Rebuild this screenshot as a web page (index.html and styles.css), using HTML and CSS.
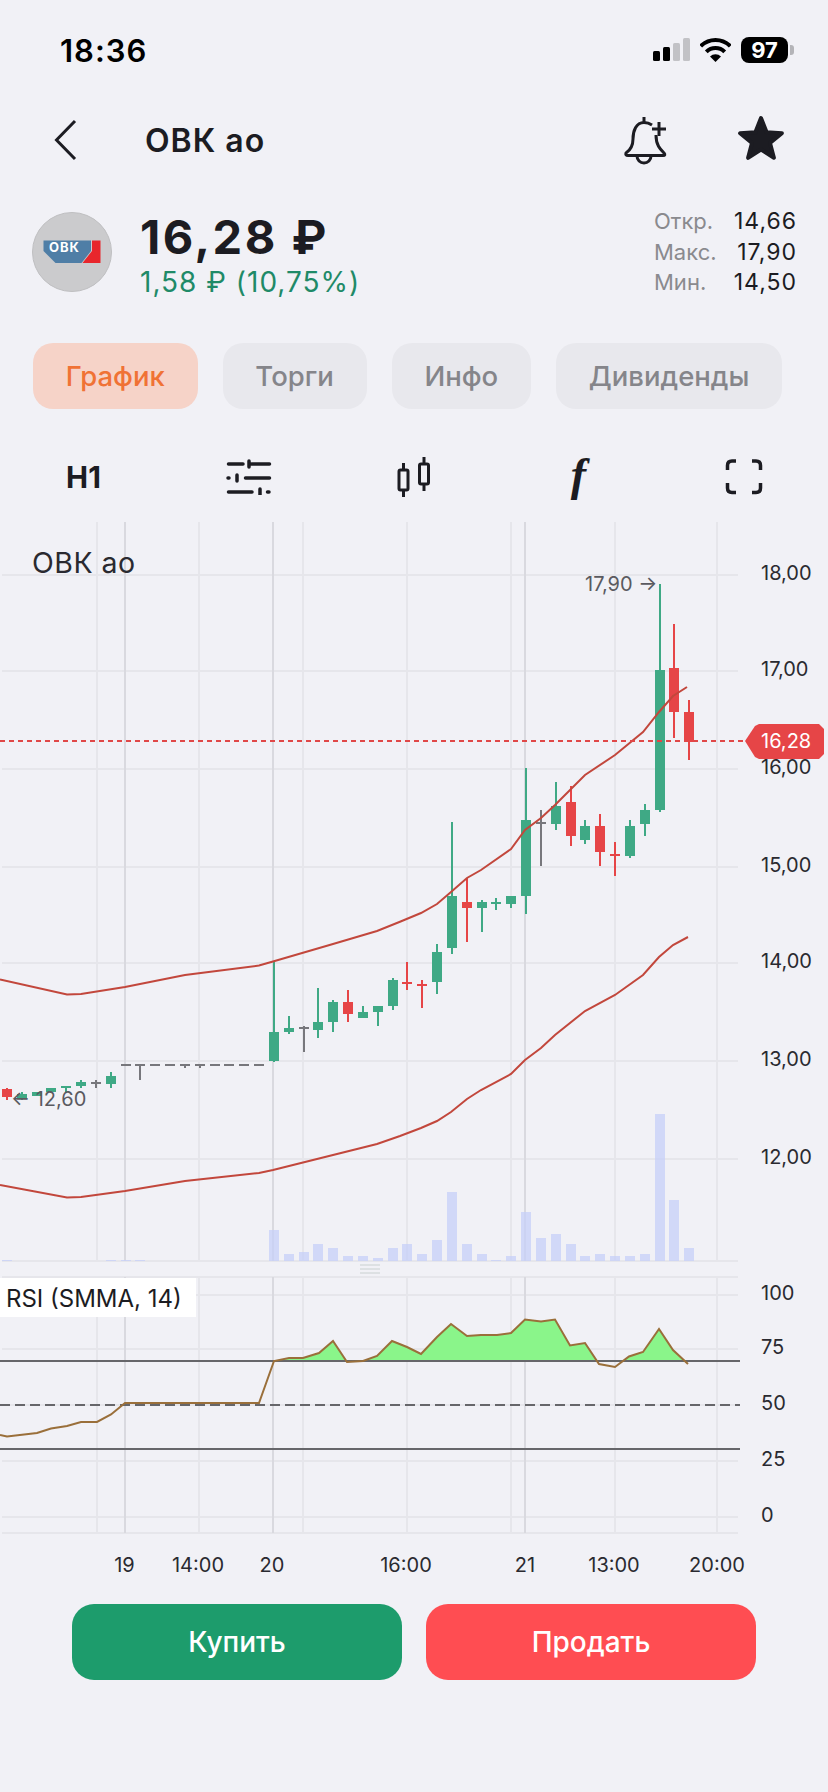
FILE: index.html
```html
<html>
  <head>
    <title>ОВК ао</title>
    <link rel="stylesheet" href="styles.css">
  </head>

  <body>
    <div class="status">
      <span class="clock">18:36</span>
      <div class="status-icons">
        <svg class="signal" width="37" height="24" viewBox="653 38 37 24">
          <rect x="653" y="51" width="7" height="10" rx="1.5" fill="#000"/>
          <rect x="663" y="47" width="7" height="14" rx="1.5" fill="#000"/>
          <rect x="673" y="43" width="7" height="18" rx="1.5" fill="#c2c2c6"/>
          <rect x="683" y="38" width="7" height="23" rx="1.5" fill="#c2c2c6"/>
        </svg>
        <svg class="wifi" width="31" height="24" viewBox="700 37 31 24">
          <path d="M700.7 45.2A21 21 0 0 1 730.3 45.2M706.3 50.8A13 13 0 0 1 724.7 50.8" fill="none" stroke="#000" stroke-width="4"/>
          <path d="M715.5 61L710 55.5A7.8 7.8 0 0 1 721 55.5Z" fill="#000"/>
        </svg>
        <div class="battery"><span>97</span></div>
        <div class="battery-nub"></div>
      </div>
    </div>

    <div class="topbar">
      <svg class="back" width="24" height="42" viewBox="54 118 24 42">
        <path d="M75 120L56.5 139L75 158" fill="none" stroke="#1c1c22" stroke-width="3"/>
      </svg>
      <span class="title">ОВК ао</span>
      <svg class="bell" width="48" height="50" viewBox="620 114 48 50">
        <path d="M643 116V122M651 124C648 122 646 121.500 643 121.500C635 121.500 632 130 632 138C632 146 628 150 625 152Q624 154.500 627 154.500H662Q665 154.500 663 152C659 148 655 144 655 134" fill="none" stroke="#1c1c22" stroke-width="3"/>
        <path d="M636 155A7 7 0 0 0 650 155" fill="none" stroke="#1c1c22" stroke-width="3"/>
        <path d="M658 121V135M651 128H665" fill="none" stroke="#1c1c22" stroke-width="3"/>
      </svg>
      <svg class="star" width="50" height="50" viewBox="735 114 50 50">
        <polygon points="760,117 765.600,131.300 780.900,132.200 769,141.900 772.900,156.800 760,148.500 747.100,156.800 751,141.900 739.100,132.200 754.400,131.300" fill="#1c1c22" stroke="#1c1c22" stroke-width="4" stroke-linejoin="round"/>
      </svg>
    </div>

    <div class="quote">
      <svg class="logo" width="80" height="80" viewBox="32 212 80 80">
        <circle cx="72" cy="252" r="39.500" fill="#cbcbcd" stroke="#bfbfc1" stroke-width="1"/>
        <polygon points="43.500,240.500 91,240.500 91,251 81.500,263 55.500,263 43.500,251" fill="#4f7ea6"/>
        <polygon points="92,240.500 100.500,240.500 100.500,263 82.500,263 92,251" fill="#e8262c"/>
        <text x="49" y="252" class="logo-text">ОВК</text>
      </svg>
      <div class="price-box">
        <div class="price">16,28 ₽</div>
        <div class="change">1,58 ₽ (10,75%)</div>
      </div>
      <div class="stats">
        <div class="stat"><span class="stat-label">Откр.</span><span class="stat-value">14,66</span></div>
        <div class="stat"><span class="stat-label">Макс.</span><span class="stat-value">17,90</span></div>
        <div class="stat"><span class="stat-label">Мин.</span><span class="stat-value">14,50</span></div>
      </div>
    </div>

    <div class="tabs">
      <div class="tab active">График</div>
      <div class="tab">Торги</div>
      <div class="tab">Инфо</div>
      <div class="tab">Дивиденды</div>
    </div>

    <div class="tools">
      <span class="tool-h1">H1</span>
      <svg width="46" height="36" viewBox="226 457 46 36">
        <path d="M228.500 462H243M249 459V465M251.500 462H269.500M228 476H229M237 473V479M245.500 476H269.500M228.500 490H252M260 487V493M267.500 490H269" fill="none" stroke="#1c1c22" stroke-width="3.500" stroke-linecap="round"/>
      </svg>
      <svg width="36" height="42" viewBox="396 455 36 42">
        <path d="M403.500 462V469M403.500 489V496M424 456V463M424 483V490" fill="none" stroke="#1c1c22" stroke-width="3"/>
        <rect x="399" y="469" width="9" height="20" rx="1.500" fill="none" stroke="#1c1c22" stroke-width="3"/>
        <rect x="419.500" y="463" width="9" height="20" rx="1.500" fill="none" stroke="#1c1c22" stroke-width="3"/>
      </svg>
      <span class="tool-f">f</span>
      <svg width="38" height="38" viewBox="725 458 38 36">
        <path d="M736 460H732Q727.500 460 727.500 464.500V469M752 460H756Q760.500 460 760.500 464.500V469M736 491.500H732Q727.500 491.500 727.500 487V482M752 491.500H756Q760.500 491.500 760.500 487V482" fill="none" stroke="#1c1c22" stroke-width="3.500"/>
      </svg>
    </div>

    <svg id="chart" class="chart" width="828" height="1070" viewBox="0 520 828 1070">
      <g id="grid"></g>
      <g id="volumes"></g>
      <g id="candles"></g>

      <polyline class="band" points="0,979.500 67,994.500 81,994 125,987 185,975 259,965.500 273,961.500 333,944 377,931 400,921.700 421,913 437,904 451,892 467,878 481,870 511,849 525,830 541,818 555,805 585,775 615,755 643,732 659,712 673,696 687,687"/>
      <polyline class="band" points="0,1185 67,1197.500 81,1197 125,1191 185,1181 259,1173 273,1170 333,1155 377,1144 400,1136 421,1128 437,1121 451,1112 467,1099 481,1090 511,1074 525,1060 541,1048 555,1035 585,1011 615,995 643,975 659,957 673,945 688,937"/>

      <line class="last-line" x1="0" y1="741" x2="746" y2="741"/>
      <polygon class="last-tag" points="745,741 755,726 759,724 819,724 824,729 824,754 819,759 759,759 755,757"/>
      <text class="last-text" x="761" y="748">16,28</text>

      <text class="chart-name" x="32" y="573">ОВК ао</text>
      <text class="mark" x="585" y="591">17,90 →</text>
      <text class="mark" x="11" y="1106">← 12,60</text>

      <g class="axis">
        <text x="761" y="580">18,00</text>
        <text x="761" y="676">17,00</text>
        <text x="761" y="774">16,00</text>
        <text x="761" y="872">15,00</text>
        <text x="761" y="968">14,00</text>
        <text x="761" y="1066">13,00</text>
        <text x="761" y="1164">12,00</text>
        <text x="761" y="1300">100</text>
        <text x="761" y="1354">75</text>
        <text x="761" y="1410">50</text>
        <text x="761" y="1466">25</text>
        <text x="761" y="1522">0</text>
      </g>

      <rect class="rsi-box" x="0" y="1278" width="196" height="39"/>
      <text class="rsi-name" x="6" y="1307">RSI (SMMA, 14)</text>

      <clipPath id="overbought"><rect x="0" y="1290" width="740" height="71"/></clipPath>
      <polygon class="rsi-fill" clip-path="url(#overbought)" points="274,1361 289,1358 303,1358 319,1353 333,1341 347,1362 363,1361 377,1356 392,1341 407,1347 421,1354 437,1337 451,1324 467,1336 481,1335 497,1335 511,1333 525,1319.500 541,1321.500 555,1319.500 570,1345.500 585,1343 599,1364 615,1367 629,1356.500 643,1352 659,1329 673,1350 688,1364"/>
      <line class="rsi-level" x1="0" y1="1361" x2="740" y2="1361"/>
      <line class="rsi-level dashed" x1="0" y1="1405" x2="740" y2="1405"/>
      <line class="rsi-level" x1="0" y1="1449" x2="740" y2="1449"/>
      <polyline class="rsi-line" points="0,1435 7,1436.500 37,1433 51,1428.500 67,1426 81,1422 97,1422 111,1414.500 125,1403 259,1403 274,1361 289,1358 303,1358 319,1353 333,1341 347,1362 363,1361 377,1356 392,1341 407,1347 421,1354 437,1337 451,1324 467,1336 481,1335 497,1335 511,1333 525,1319.500 541,1321.500 555,1319.500 570,1345.500 585,1343 599,1364 615,1367 629,1356.500 643,1352 659,1329 673,1350 688,1364"/>

      <g class="times">
        <text x="124.500" y="1572">19</text>
        <text x="198" y="1572">14:00</text>
        <text x="272" y="1572">20</text>
        <text x="406" y="1572">16:00</text>
        <text x="525" y="1572">21</text>
        <text x="614" y="1572">13:00</text>
        <text x="717" y="1572">20:00</text>
      </g>
    </svg>

    <div class="actions">
      <button class="btn buy">Купить</button>
      <button class="btn sell">Продать</button>
    </div>

    <script src="chart.js"></script>
  </body>
</html>
```

FILE: styles.css
```css
body {
  margin: 0px;
  width: 828px;
  height: 1792px;
  overflow: hidden;
  background-color: #f1f1f6;
  font-family: Inter, "Noto Sans", sans-serif;
  color: #1c1c22;
}

.status {
  display: flex;
  justify-content: space-between;
  align-items: center;
  height: 100px;
  padding: 0px 34px 0px 60px;
}

.clock {
  font-size: 31px;
  font-weight: 600;
  letter-spacing: 1px;
  color: #000;
}

.status-icons {
  display: flex;
  align-items: center;
  gap: 10px;
}

.battery {
  display: flex;
  justify-content: center;
  align-items: center;
  width: 47px;
  height: 26px;
  border-radius: 8px;
  background-color: #000;
  color: #fff;
  font-size: 22px;
  font-weight: 700;
}

.battery-nub {
  width: 4px;
  height: 10px;
  margin-left: -8px;
  border-radius: 0px 3px 3px 0px;
  background-color: #b4b4b8;
}

.topbar {
  display: flex;
  align-items: center;
  height: 80px;
  padding: 0px 42px 0px 54px;
}

.title {
  margin-left: 67px;
  font-size: 32px;
  font-weight: 600;
  letter-spacing: 1px;
  flex: 1;
}

.star {
  margin-left: 67px;
}

.quote {
  display: flex;
  align-items: center;
  height: 100px;
  margin-top: 22px;
  padding: 0px 31px 0px 32px;
}

.logo-text {
  font-size: 13px;
  font-weight: 700;
  letter-spacing: 1px;
  fill: #fff;
}

.price-box {
  flex: 1;
  margin-left: 28px;
  padding-top: 7px;
}

.price {
  font-size: 47px;
  font-weight: 700;
  line-height: 52px;
  letter-spacing: 2.5px;
}

.change {
  margin-top: 1.500px;
  font-size: 28px;
  line-height: 36px;
  letter-spacing: 1px;
  color: #1f8a68;
}

.stats {
  display: flex;
  flex-direction: column;
}

.stat {
  display: flex;
  justify-content: space-between;
  width: 143px;
  line-height: 30.500px;
  font-size: 22px;
}

.stat-label {
  color: #8a8a8e;
}

.stat-value {
  font-size: 23px;
  letter-spacing: 1px;
}

.tabs {
  display: flex;
  gap: 25px;
  margin-top: 41px;
  padding: 0px 33px;
}

.tab {
  display: flex;
  align-items: center;
  height: 66px;
  padding: 0px 32.800px;
  border-radius: 20px;
  background-color: #e8e8ed;
  color: #85858a;
  font-size: 27.500px;
  font-weight: 500;
}

.tab.active {
  background-color: #f6d3c8;
  color: #f07235;
}

.tools {
  display: grid;
  grid-template-columns: repeat(5, 165px);
  align-items: center;
  justify-items: center;
  height: 62px;
  margin-top: 37px;
  padding-left: 1px;
}

.tool-h1 {
  font-size: 29.500px;
  font-weight: 700;
}

.tool-f {
  font-family: "Liberation Serif", serif;
  font-style: italic;
  font-weight: 700;
  font-size: 46px;
  line-height: 50px;
  margin-bottom: 5px;
}

.chart {
  display: block;
  margin-top: 12px;
}

.grid-line {
  stroke: #e6e6eb;
  stroke-width: 2;
}

.grid-line.major {
  stroke: #d9d9df;
}

.volume {
  fill: #c6cff8;
  opacity: 0.75;
}

.band {
  fill: none;
  stroke: #c2473c;
  stroke-width: 2;
}

.last-line {
  stroke: #e04848;
  stroke-width: 2;
  stroke-dasharray: 5 4;
}

.last-tag {
  fill: #e64547;
}

.last-text {
  fill: #fff;
  font-size: 20px;
}

.chart-name {
  font-size: 28.500px;
  letter-spacing: 0.5px;
  fill: #2a2a30;
}

.mark {
  font-size: 20px;
  fill: #5a5a60;
}

.axis text,
.times text {
  font-size: 20px;
  fill: #2a2a30;
}

.times text {
  text-anchor: middle;
}

.rsi-box {
  fill: #fff;
}

.rsi-name {
  font-size: 24px;
  fill: #1c1c22;
}

.rsi-fill {
  fill: #8af58a;
}

.rsi-level {
  stroke: #66666a;
  stroke-width: 2;
}

.rsi-level.dashed {
  stroke-dasharray: 10 5;
}

.rsi-line {
  fill: none;
  stroke: #9a6f3a;
  stroke-width: 2;
}

.actions {
  display: flex;
  gap: 24px;
  margin-top: 14px;
  padding: 0px 72px;
}

.btn {
  flex: 1;
  height: 76px;
  border: none;
  border-radius: 22px;
  color: #fff;
  font-family: Inter, "Noto Sans", sans-serif;
  font-size: 28px;
  font-weight: 500;
}

.buy {
  background-color: #1d9c6c;
}

.sell {
  background-color: #ff4d52;
}
```

FILE: chart.js
```js
const SVG_NS = 'http://www.w3.org/2000/svg';
const GREEN = '#3fa985';
const RED = '#e64547';
const GRAY = '#77777c';

// x of candle number k
function slot(k) {
  return Math.round(7 + k * 14.83);
}

function add(parent, name, attrs) {
  const el = document.createElementNS(SVG_NS, name);
  for (const key in attrs) el.setAttribute(key, attrs[key]);
  parent.appendChild(el);
  return el;
}

// [body top, body bottom, wick top, wick bottom, color]
const candles = [
  [1089, 1097, 1088, 1100, RED],
  [1094, 1099, 1092, 1100, GREEN],
  [1092, 1096, 1092, 1096, GREEN],
  [1088, 1092, 1088, 1093, GREEN],
  [1086, 1088, 1086, 1093, GREEN],
  [1082, 1086, 1080, 1088, GREEN],
  [1082, 1084, 1080, 1088, GRAY],
  [1076, 1084, 1072, 1088, GREEN],
  [1064, 1066, 1064, 1066, GRAY],
  [1064, 1066, 1064, 1080, GRAY],
  [1064, 1066, 1064, 1066, GRAY],
  [1064, 1066, 1064, 1066, GRAY],
  [1064, 1066, 1064, 1068, GRAY],
  [1064, 1066, 1064, 1068, GRAY],
  [1064, 1066, 1064, 1066, GRAY],
  [1064, 1066, 1064, 1066, GRAY],
  [1064, 1066, 1064, 1066, GRAY],
  [1064, 1066, 1064, 1066, GRAY],
  [1032, 1061, 962, 1062, GREEN],
  [1028, 1032, 1016, 1034, GREEN],
  [1027, 1029, 1026, 1052, GRAY],
  [1022, 1030, 988, 1038, GREEN],
  [1002, 1022, 1000, 1032, GREEN],
  [1002, 1014, 990, 1022, RED],
  [1012, 1018, 1006, 1018, GREEN],
  [1006, 1012, 1006, 1026, GREEN],
  [980, 1006, 978, 1010, GREEN],
  [982, 984, 962, 990, RED],
  [984, 986, 980, 1008, RED],
  [952, 982, 944, 994, GREEN],
  [896, 948, 822, 954, GREEN],
  [902, 908, 878, 942, RED],
  [902, 908, 900, 932, GREEN],
  [902, 904, 898, 910, GREEN],
  [896, 904, 896, 908, GREEN],
  [820, 896, 768, 914, GREEN],
  [822, 824, 810, 866, GRAY],
  [806, 824, 782, 830, GREEN],
  [802, 836, 786, 846, RED],
  [826, 840, 820, 844, GREEN],
  [826, 852, 814, 866, RED],
  [854, 856, 842, 876, RED],
  [826, 856, 820, 858, GREEN],
  [810, 824, 804, 836, GREEN],
  [670, 810, 584, 812, GREEN],
  [668, 712, 624, 738, RED],
  [712, 742, 700, 760, RED],
];

// top of each volume bar, the bars stand on y = 1261
const volumes = [
  1260, 0, 0, 0, 0, 0, 0, 1260, 1260, 1260, 0, 0, 0, 0, 0, 0, 0, 0,
  1230, 1254, 1252, 1244, 1248, 1256, 1256, 1258, 1248, 1244, 1254, 1240,
  1192, 1244, 1254, 1260, 1256, 1212, 1238, 1234, 1244, 1256, 1254, 1256,
  1256, 1254, 1114, 1200, 1248,
];

function drawGrid() {
  const grid = document.querySelector('#grid');
  const rows = [575, 671, 769, 867, 963, 1061, 1159, 1261, 1277, 1295, 1349, 1405, 1461, 1517, 1533];
  rows.forEach((y) => {
    add(grid, 'line', { class: 'grid-line', x1: 2, x2: 738, y1: y, y2: y });
  });
  const cols = [[97], [125, 1], [199], [273, 1], [303], [407], [511], [525, 1], [615], [717]];
  cols.forEach(([x, major]) => {
    const cls = major ? 'grid-line major' : 'grid-line';
    add(grid, 'line', { class: cls, x1: x, x2: x, y1: 522, y2: 1261 });
    add(grid, 'line', { class: cls, x1: x, x2: x, y1: 1277, y2: 1533 });
  });
  // pane resize handle
  [1265, 1269, 1273].forEach((y) => {
    add(grid, 'line', { x1: 360, x2: 380, y1: y, y2: y, stroke: '#c9d0d0', 'stroke-width': 1 });
  });
}

function drawVolumes() {
  const group = document.querySelector('#volumes');
  volumes.forEach((top, k) => {
    if (!top) return;
    add(group, 'rect', { class: 'volume', x: slot(k) - 5, y: top, width: 10, height: 1261 - top });
  });
}

function drawCandles() {
  const group = document.querySelector('#candles');
  candles.forEach(([top, bottom, wickTop, wickBottom, color], k) => {
    const x = slot(k);
    add(group, 'rect', { x: x - 1, y: wickTop, width: 2, height: wickBottom - wickTop, fill: color });
    add(group, 'rect', { x: x - 5, y: top, width: 10, height: bottom - top, fill: color });
  });
}

drawGrid();
drawVolumes();
drawCandles();
```
